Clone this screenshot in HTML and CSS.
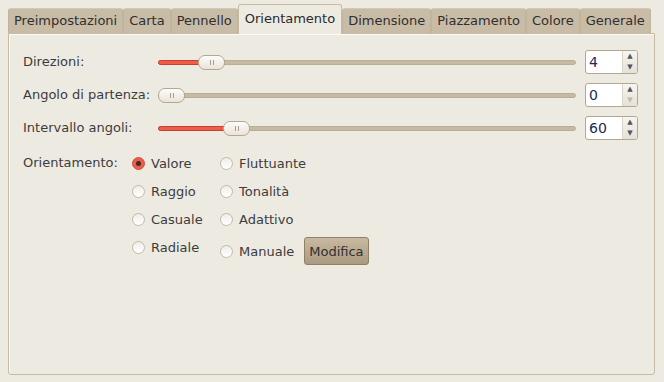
FILE: index.html
```html
<!DOCTYPE html>
<html lang="it">
<head>
    <meta charset="UTF-8">
    <title>Orientamento</title>
    <link rel="stylesheet" href="styles.css">
</head>
<body>
    <div class="notebook">
        <div class="tabs">
            <div class="tab">Preimpostazioni</div>
            <div class="tab">Carta</div>
            <div class="tab">Pennello</div>
            <div class="tab active">Orientamento</div>
            <div class="tab">Dimensione</div>
            <div class="tab">Piazzamento</div>
            <div class="tab">Colore</div>
            <div class="tab">Generale</div>
        </div>

        <div class="panel">
            <div class="scales">
                <div class="label">Direzioni:</div>
                <div class="slider">
                    <div class="track"></div>
                    <div class="fill" style="width: 50px;"></div>
                    <div class="thumb" style="left: 40px;"><span></span><span></span></div>
                </div>
                <div class="spin">
                    <div class="value">4</div>
                    <div class="arrows"><span class="up">&#9650;</span><span class="down">&#9660;</span></div>
                </div>

                <div class="label">Angolo di partenza:</div>
                <div class="slider">
                    <div class="track"></div>
                    <div class="thumb" style="left: 0px;"><span></span><span></span></div>
                </div>
                <div class="spin">
                    <div class="value">0</div>
                    <div class="arrows"><span class="up">&#9650;</span><span class="down off">&#9660;</span></div>
                </div>

                <div class="label">Intervallo angoli:</div>
                <div class="slider">
                    <div class="track"></div>
                    <div class="fill" style="width: 75px;"></div>
                    <div class="thumb" style="left: 65px;"><span></span><span></span></div>
                </div>
                <div class="spin">
                    <div class="value">60</div>
                    <div class="arrows"><span class="up">&#9650;</span><span class="down">&#9660;</span></div>
                </div>
            </div>

            <div class="orient">
                <div class="orient-label">Orientamento:</div>
                <div class="radio-col first">
                    <div class="radio checked"><i></i>Valore</div>
                    <div class="radio"><i></i>Raggio</div>
                    <div class="radio"><i></i>Casuale</div>
                    <div class="radio"><i></i>Radiale</div>
                </div>
                <div class="radio-col">
                    <div class="radio"><i></i>Fluttuante</div>
                    <div class="radio"><i></i>Tonalità</div>
                    <div class="radio"><i></i>Adattivo</div>
                    <div class="radio tall"><i></i>Manuale <button class="btn">Modifica</button></div>
                </div>
            </div>
        </div>
    </div>
</body>
</html>
```

FILE: styles.css
```css
body {
    margin: 0;
    background: #edeae2;
    font-family: "DejaVu Sans", sans-serif;
    font-size: 13px;
    color: #3c3c3c;
}
.notebook {
    padding: 5px 9px 0 8px;
}
.tabs {
    display: flex;
    align-items: flex-end;
    height: 28px;
}
.tab {
    height: 24px;
    line-height: 24px;
    padding: 0 5px;
    background: #c9bca6;
    border: 1px solid #c1b49d;
    border-bottom: none;
    border-top-color: #d4c9b6;
    border-radius: 3px 3px 0 0;
    color: #2f2f2f;
    white-space: nowrap;
}
.tab.active {
    height: 29px;
    line-height: 27px;
    padding: 0 6px;
    background: #edeae2;
    border-color: #c7bba4;
    margin-bottom: -1px;
    position: relative;
    z-index: 1;
    color: #2a2a2a;
}
.panel {
    height: 324px;
    border: 1px solid #c7bba4;
    border-radius: 0 0 3px 3px;
    box-shadow: inset 1px 1px 0 #fbfaf7;
    padding: 16px 0 0 14px;
}
.scales {
    display: grid;
    grid-template-columns: 126px 418px 53px;
    column-gap: 9px;
    row-gap: 9px;
    align-items: center;
}
.label {
    height: 24px;
    line-height: 24px;
    white-space: nowrap;
}
.slider {
    position: relative;
    height: 15px;
}
.track {
    position: absolute;
    left: 0;
    right: 0;
    top: 5px;
    height: 3px;
    background: #c6baa3;
    border: 1px solid #b9ad95;
    border-radius: 3px;
}
.fill {
    position: absolute;
    left: 0;
    top: 5px;
    height: 3px;
    background: #ef5d48;
    border: 1px solid #c8412f;
    border-radius: 3px;
}
.thumb {
    position: absolute;
    top: 0;
    width: 25px;
    height: 13px;
    border: 1px solid #b3a78f;
    border-radius: 7px;
    background: linear-gradient(#fdfcfa, #e9e4da);
    display: flex;
    justify-content: center;
    align-items: center;
    gap: 2px;
}
.thumb span {
    width: 1px;
    height: 5px;
    background: #a99d87;
}
.spin {
    display: flex;
    height: 22px;
    border: 1px solid #b3a78f;
    border-radius: 3px;
    background: #fff;
    overflow: hidden;
}
.value {
    flex: 1;
    line-height: 22px;
    padding-left: 3px;
    font-size: 14px;
    color: #1f2a55;
}
.arrows {
    width: 14px;
    display: flex;
    flex-direction: column;
    justify-content: space-around;
    align-items: center;
    background: linear-gradient(#f7f5f1, #e6e1d7);
    border-left: 1px solid #ddd6c8;
    font-size: 7px;
    color: #555;
    line-height: 9px;
}
.arrows .off {
    color: #c0b7a8;
}
.orient {
    display: flex;
    margin-top: 12px;
}
.orient-label {
    width: 109px;
    height: 22px;
    line-height: 22px;
}
.radio-col {
    display: flex;
    flex-direction: column;
    gap: 6px;
}
.radio-col.first {
    width: 88px;
}
.radio {
    display: flex;
    align-items: center;
    height: 22px;
}
.radio.tall {
    height: 30px;
}
.radio i {
    width: 11px;
    height: 11px;
    border: 1px solid #c3b9a6;
    border-radius: 50%;
    background: linear-gradient(#f0ede7, #ffffff);
    margin-right: 6px;
    box-sizing: content-box;
    display: flex;
    align-items: center;
    justify-content: center;
}
.radio.checked i {
    background: #ec5c48;
    border-color: #d0513f;
}
.radio.checked i::after {
    content: "";
    width: 5px;
    height: 5px;
    border-radius: 50%;
    background: #3a2a28;
}
.btn {
    margin-left: 10px;
    height: 28px;
    padding: 0 4px;
    font-family: "DejaVu Sans", sans-serif;
    font-size: 13px;
    color: #2f2f2f;
    border: 1px solid #8f8169;
    border-radius: 3px;
    background: linear-gradient(#c8baa1, #a99a80);
}
```
